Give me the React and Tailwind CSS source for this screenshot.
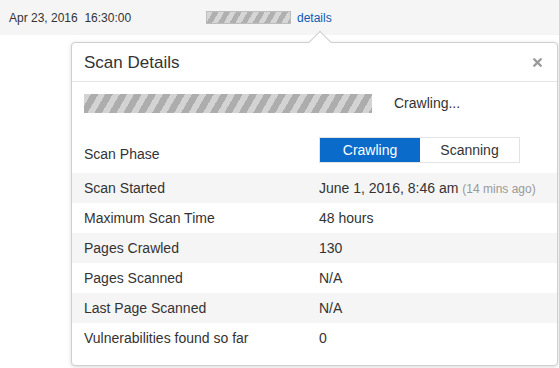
import { X } from "lucide-react";

const ROWS = [
  { label: "Scan Started", value: "June 1, 2016, 8:46 am", note: "(14 mins ago)" },
  { label: "Maximum Scan Time", value: "48 hours" },
  { label: "Pages Crawled", value: "130" },
  { label: "Pages Scanned", value: "N/A" },
  { label: "Last Page Scanned", value: "N/A" },
  { label: "Vulnerabilities found so far", value: "0" },
];

export default function App() {
  return (
    <div className="h-[368px] w-[559px] overflow-hidden bg-white font-['Liberation_Sans',Arial,sans-serif] text-[#333]">
      {/* list row */}
      <div className="flex h-[35px] items-center bg-[#f5f5f5] pl-[9px] text-[12px]">
        <span className="w-[197px] whitespace-pre">Apr 23, 2016  16:30:00</span>
        <span className="h-[13px] w-[85px] border border-[#bdbdbd] bg-[repeating-linear-gradient(120deg,#d6d6d6_0_5px,#b0b0b0_5px_10px)]" />
        <a className="ml-[6px] text-[#0b5cb5]">details</a>
      </div>

      {/* popover */}
      <div className="relative ml-[71px] mt-[7px] w-[487px] rounded-[4px] border border-[#cfcfcf] bg-white shadow-[0_1px_4px_rgba(0,0,0,0.15)]">
        <span className="absolute -top-[9px] left-[240px] h-[16px] w-[16px] rotate-45 border-l border-t border-[#cfcfcf] bg-white" />
        <div className="relative flex h-[39px] items-center justify-between border-b border-[#e5e5e5] px-[12px]">
          <span className="text-[17px] leading-none">Scan Details</span>
          <X className="mr-[1px] h-[13px] w-[13px] text-[#9a9a9a]" strokeWidth={4.5} />
        </div>

        <div className="flex items-center px-[12px] pt-[11px]">
          <span className="h-[19px] w-[288px] bg-[repeating-linear-gradient(120deg,#d3d3d3_0_6px,#adadad_6px_12.5px)]" />
          <span className="ml-[22px] text-[14px]">Crawling...</span>
        </div>

        <div className="mt-[23px] flex h-[26px] items-center px-[12px] text-[14px]">
          <span className="mt-[8px] w-[235px]">Scan Phase</span>
          <div className="flex h-[26px] border border-[#e3e3e3]">
            <span className="flex w-[100px] items-center justify-center bg-[#0a6bcb] text-white">Crawling</span>
            <span className="flex w-[99px] items-center justify-center bg-white">Scanning</span>
          </div>
        </div>

        <div className="mt-[10px] pb-[12px] text-[14px]">
          {ROWS.map((r, i) => (
            <div
              key={r.label}
              className={`flex h-[30px] items-center px-[12px] ${i % 2 === 0 ? "bg-[#f5f5f5]" : ""}`}
            >
              <span className="w-[235px]">{r.label}</span>
              <span>
                {r.value}
                {r.note && <span className="ml-[4px] text-[12px] text-[#999]">{r.note}</span>}
              </span>
            </div>
          ))}
        </div>
      </div>
    </div>
  );
}
